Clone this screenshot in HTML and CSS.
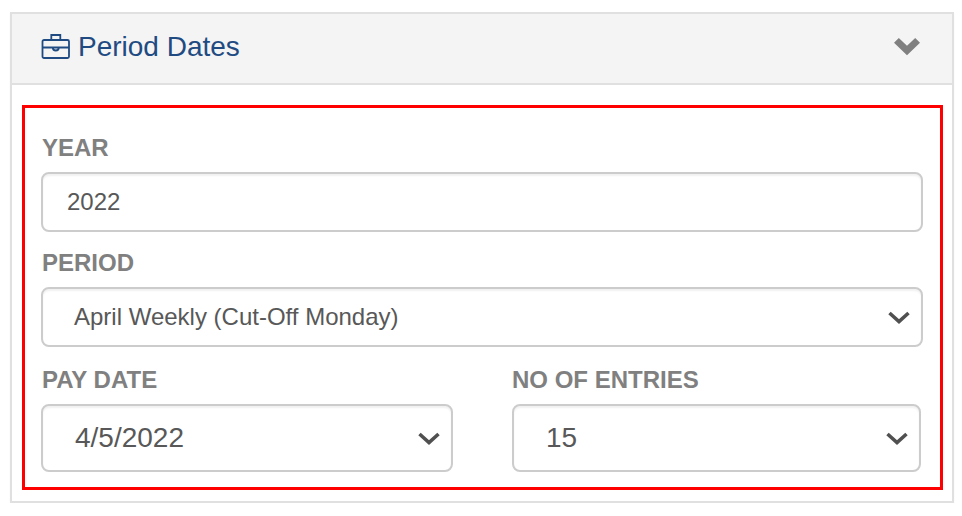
FILE: index.html
```html
<!DOCTYPE html>
<html lang="en">
<head>
<meta charset="utf-8">
<title>Period Dates</title>
<link rel="stylesheet" href="styles.css">
</head>
<body>
<section class="panel">
  <header class="panel-header">
    <svg class="briefcase" width="30" height="28" viewBox="0 0 30 28" fill="none">
      <rect x="1.500" y="7" width="26.500" height="18" rx="1.500"/>
      <path d="M10.300 7V2h9v5M1.500 14.500h26.500M11.800 14.500c0 4 6 4 6 0"/>
    </svg>
    <h1 class="panel-title">Period Dates</h1>
    <svg class="toggle" width="28" height="18" viewBox="0 0 28 18"><path d="M1 4.700L5.800.100 14 7.800 22.200.100 27 4.700 14 17.300z"/></svg>
  </header>
  <div class="panel-body">
    <div class="field">
      <div class="label">YEAR</div>
      <div class="control">2022</div>
    </div>
    <div class="field">
      <div class="label">PERIOD</div>
      <div class="control select">
        <span class="period-value">April Weekly (Cut-Off Monday)</span>
        <svg class="arrow" width="22" height="14" viewBox="0 0 22 14"><path d="M1.500 3L11 11.500 20.500 3"/></svg>
      </div>
    </div>
    <div class="row">
      <div class="field">
        <div class="label">PAY DATE</div>
        <div class="control select large">
          <span>4/5/2022</span>
          <svg class="arrow" width="22" height="14" viewBox="0 0 22 14"><path d="M1.500 3L11 11.500 20.500 3"/></svg>
        </div>
      </div>
      <div class="field">
        <div class="label entries-label">NO OF ENTRIES</div>
        <div class="control select large">
          <span>15</span>
          <svg class="arrow" width="22" height="14" viewBox="0 0 22 14"><path d="M1.500 3L11 11.500 20.500 3"/></svg>
        </div>
      </div>
    </div>
  </div>
</section>
</body>
</html>
```
FILE: styles.css
```css
* { box-sizing: border-box; }

body {
  margin: 0;
  padding: 12px 8px 0 10px;
  background: #fff;
  font-family: "Liberation Sans", Arial, sans-serif;
  overflow: hidden;
}

.panel {
  width: 944px;
  height: 491px;
  border: 2px solid #e0e0e0;
  background: #fff;
  box-shadow: 0 2px 2px rgba(0, 0, 0, .04);
}

.panel-header {
  display: flex;
  align-items: center;
  height: 71px;
  padding: 0 31px 4px 29px;
  background: #f4f4f4;
  border-bottom: 2px solid #e0e0e0;
}

.briefcase {
  stroke: #1f4b82;
  stroke-width: 1.800;
}

.panel-title {
  margin: 0 auto 0 7px;
  color: #1f4b82;
  font-size: 28px;
  font-weight: 400;
  line-height: 32px;
}

.toggle { fill: #808080; }

.panel-body {
  width: 921px;
  height: 385px;
  margin: 20px 0 0 10px;
  padding: 26px 17px 0 16px;
  border: 3px solid #f00;
}

.field {
  display: flex;
  flex-direction: column;
  gap: 10px;
  margin-bottom: 17px;
}

.label {
  height: 28px;
  padding-left: 1px;
  color: #808080;
  font-size: 24px;
  font-weight: 700;
  line-height: 28px;
}

.entries-label { padding-left: 0; }

.control {
  display: flex;
  align-items: center;
  height: 60px;
  padding: 0 11px 0 24px;
  border: 2px solid #ccc;
  border-radius: 8px;
  box-shadow: inset 0 2px 2px rgba(0, 0, 0, .06);
  color: #585858;
  font-size: 24px;
}

.select {
  justify-content: space-between;
  padding-left: 32px;
}

.period-value { margin-left: -1px; }

.large {
  height: 68px;
  font-size: 28px;
}

.arrow {
  fill: none;
  stroke: #505050;
  stroke-width: 3.600;
}

.row {
  display: grid;
  grid-template-columns: 412px 409px;
  gap: 59px;
  margin-top: 19px;
}
```
